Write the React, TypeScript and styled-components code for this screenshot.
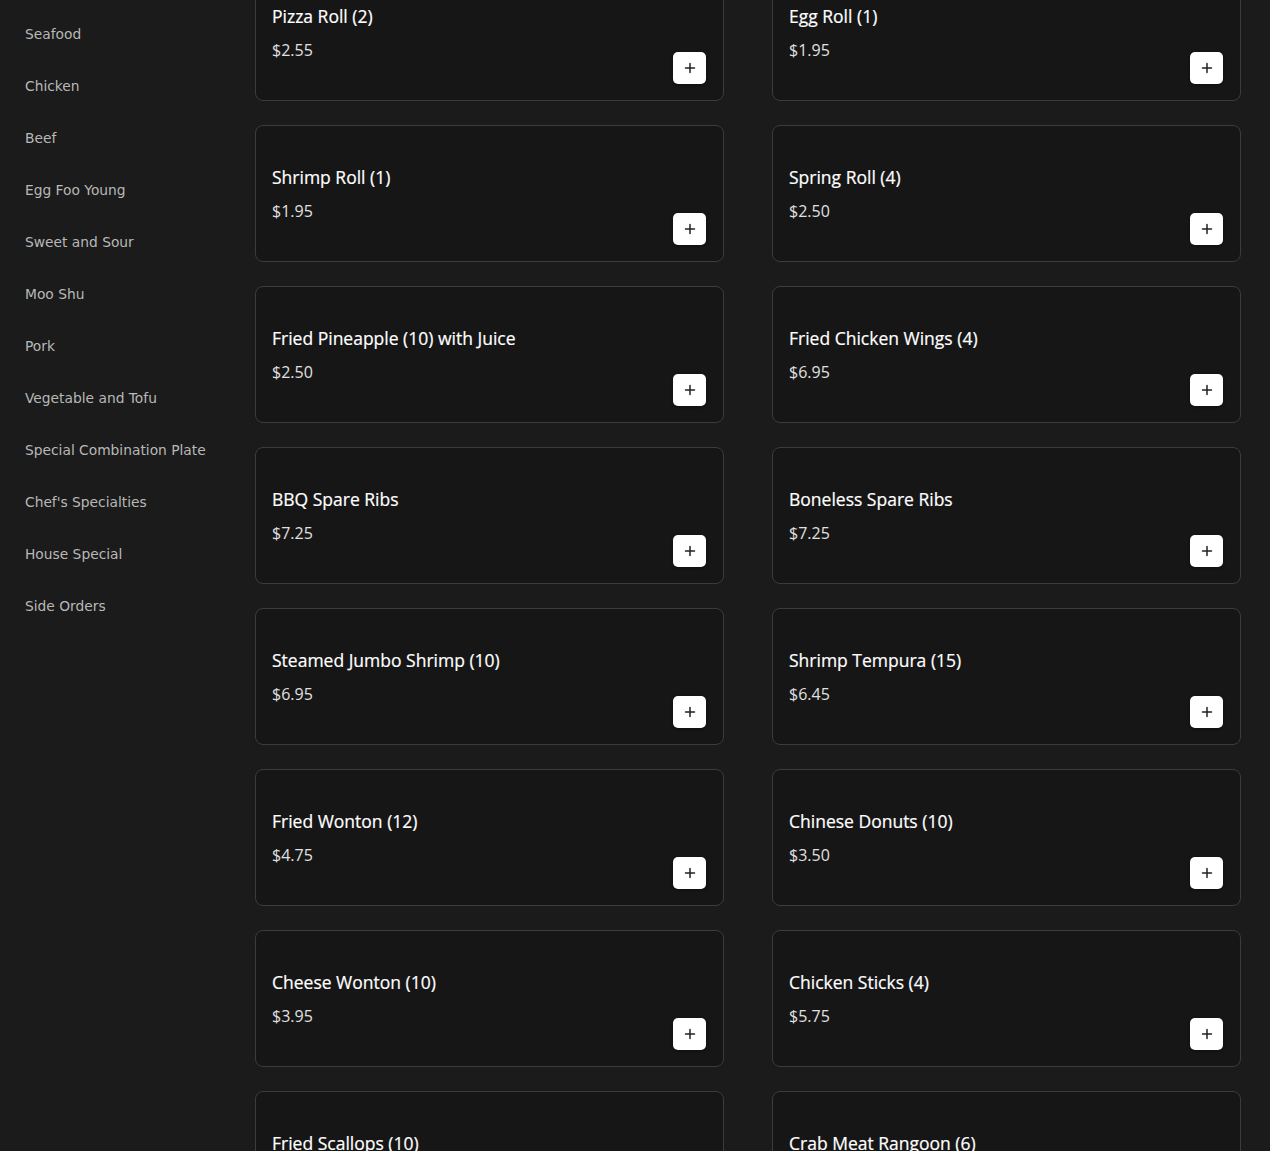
import React from "react";
import styled, { createGlobalStyle } from "styled-components";

const GlobalStyle = createGlobalStyle`
  html, body {
    margin: 0;
    padding: 0;
    background: #1b1b1b;
    overflow: hidden;
  }
  * { box-sizing: border-box; }
`;

const Page = styled.div`
  display: flex;
  align-items: flex-start;
  width: 1270px;
  height: 1151px;
  overflow: hidden;
  background: #1b1b1b;
`;

const Sidebar = styled.nav`
  flex: 0 0 255px;
  display: flex;
  flex-direction: column;
  padding: 8px 0 0 25px;
`;

const NavItem = styled.a`
  display: block;
  height: 52px;
  line-height: 52px;
  font-family: "DejaVu Sans", sans-serif;
  font-size: 13.8px;
  color: #b8b8b8;
  text-decoration: none;
  cursor: pointer;
`;

const Grid = styled.div`
  flex: 1;
  display: grid;
  grid-template-columns: 469px 469px;
  column-gap: 48px;
  row-gap: 24px;
  margin-top: -36px;
`;

const Card = styled.div`
  position: relative;
  height: 137px;
  background: #161616;
  border: 1px solid #3c3c3c;
  border-radius: 8px;
  padding: 39px 16px 16px;
`;

const Title = styled.h3`
  margin: 0;
  font-family: "Open Sans", sans-serif;
  font-weight: 500;
  font-size: 17.5px;
  line-height: 24px;
  color: #ffffff;
  -webkit-text-stroke: 0.2px #ffffff;
`;

const Price = styled.div`
  margin-top: 10px;
  font-family: "Open Sans", sans-serif;
  font-weight: 400;
  font-size: 16px;
  line-height: 24px;
  color: #e0e0e0;
`;

const AddButton = styled.button`
  position: absolute;
  right: 17px;
  bottom: 16px;
  width: 33px;
  height: 32px;
  border: none;
  border-radius: 5px;
  background: #ffffff;
  box-shadow: 0 1px 3px rgba(0, 0, 0, 0.4);
  display: flex;
  align-items: center;
  justify-content: center;
  padding: 0;
  cursor: pointer;
`;

const categories = [
  "Seafood",
  "Chicken",
  "Beef",
  "Egg Foo Young",
  "Sweet and Sour",
  "Moo Shu",
  "Pork",
  "Vegetable and Tofu",
  "Special Combination Plate",
  "Chef's Specialties",
  "House Special",
  "Side Orders",
];

const items: [string, string][] = [
  ["Pizza Roll (2)", "$2.55"],
  ["Egg Roll (1)", "$1.95"],
  ["Shrimp Roll (1)", "$1.95"],
  ["Spring Roll (4)", "$2.50"],
  ["Fried Pineapple (10) with Juice", "$2.50"],
  ["Fried Chicken Wings (4)", "$6.95"],
  ["BBQ Spare Ribs", "$7.25"],
  ["Boneless Spare Ribs", "$7.25"],
  ["Steamed Jumbo Shrimp (10)", "$6.95"],
  ["Shrimp Tempura (15)", "$6.45"],
  ["Fried Wonton (12)", "$4.75"],
  ["Chinese Donuts (10)", "$3.50"],
  ["Cheese Wonton (10)", "$3.95"],
  ["Chicken Sticks (4)", "$5.75"],
  ["Fried Scallops (10)", "$7.25"],
  ["Crab Meat Rangoon (6)", "$4.95"],
];

const PlusIcon = () => (
  <svg width="12" height="12" viewBox="0 0 12 12" aria-hidden="true">
    <path d="M6 1.5v9M1.5 6h9" stroke="#222" strokeWidth="1.5" strokeLinecap="round" />
  </svg>
);

export default function App() {
  return (
    <>
      <GlobalStyle />
      <Page>
        <Sidebar>
          {categories.map((c) => (
            <NavItem key={c}>{c}</NavItem>
          ))}
        </Sidebar>
        <Grid>
          {items.map(([name, price]) => (
            <Card key={name}>
              <Title>{name}</Title>
              <Price>{price}</Price>
              <AddButton aria-label={`Add ${name}`}>
                <PlusIcon />
              </AddButton>
            </Card>
          ))}
        </Grid>
      </Page>
    </>
  );
}
